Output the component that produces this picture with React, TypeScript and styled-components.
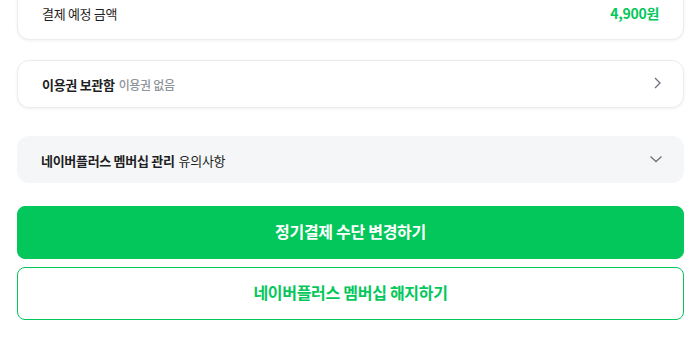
import styled, { createGlobalStyle } from 'styled-components'

const GlobalStyle = createGlobalStyle`
    html, body {
        margin: 0;
        padding: 0;
        background: #ffffff;
    }
    body {
        font-family: "Noto Sans CJK KR", "Noto Sans", sans-serif;
        color: #1e1e23;
        letter-spacing: -0.3px;
        line-height: 1;
    }
    * {
        box-sizing: border-box;
    }
`

const Page = styled.main`
    display: flex;
    flex-direction: column;
    padding: 0 16px 0 17px;
    overflow: hidden;
    height: 338px;
`

const Card = styled.section`
    display: flex;
    align-items: center;
    justify-content: space-between;
    padding: 0 24px 2px;
    height: 48px;
    background: #ffffff;
    border: 1px solid #ebecef;
    border-radius: 12px;
    box-shadow: 0 1px 3px rgba(0, 0, 0, 0.06);
`

const SummaryCard = styled(Card)`
    margin-top: -20px;
    height: 60px;
    padding-top: 8px;
    border-top-left-radius: 0;
    border-top-right-radius: 0;
`

const LinkCard = styled(Card)`
    margin-top: 20px;
    padding-right: 20px;
`

const Accordion = styled.section`
    display: flex;
    align-items: center;
    justify-content: space-between;
    margin-top: 28px;
    height: 47px;
    padding: 0 20px 2px 24px;
    background: #f5f6f8;
    border-radius: 12px;
`

const Label = styled.span`
    font-size: 13px;
    color: #1e1e23;
`

const Strong = styled.strong`
    font-weight: 700;
    font-size: 13px;
`

const Muted = styled.span`
    font-size: 12px;
    font-weight: 500;
    color: #8f949c;
    margin-left: 4px;
`

const Plain = styled.span`
    font-size: 13px;
    margin-left: 4px;
`

const Amount = styled.span`
    font-size: 14px;
    font-weight: 700;
    color: #03c75a;
`

const Button = styled.button<{ $outline?: boolean }>`
    display: flex;
    align-items: center;
    justify-content: center;
    width: 100%;
    height: 53px;
    padding: 0 0 3px;
    border-radius: 8px;
    font-family: inherit;
    font-size: 16px;
    font-weight: 700;
    line-height: 1;
    letter-spacing: -0.3px;
    cursor: pointer;
    border: 1px solid #03c75a;
    background: ${(p) => (p.$outline ? '#ffffff' : '#03c75a')};
    color: ${(p) => (p.$outline ? '#03c75a' : '#ffffff')};
`

const Actions = styled.div`
    display: flex;
    flex-direction: column;
    gap: 8px;
    margin-top: 23px;
`

const Icon = styled.svg`
    flex-shrink: 0;
    color: #6f737a;
`

export default function App(): JSX.Element {
    return (
        <>
            <GlobalStyle />
            <Page>
                <SummaryCard>
                    <Label>결제 예정 금액</Label>
                    <Amount>4,900원</Amount>
                </SummaryCard>
                <LinkCard>
                    <span>
                        <Strong>이용권 보관함</Strong>
                        <Muted>이용권 없음</Muted>
                    </span>
                    <Icon width="12" height="14" viewBox="0 0 12 14" fill="none">
                        <path
                            d="M4 2 L9 7 L4 12"
                            stroke="currentColor"
                            strokeWidth="1.3"
                        />
                    </Icon>
                </LinkCard>
                <Accordion>
                    <span>
                        <Strong>네이버플러스 멤버십 관리</Strong>
                        <Plain>유의사항</Plain>
                    </span>
                    <Icon width="16" height="12" viewBox="0 0 16 12" fill="none">
                        <path
                            d="M2.5 3.5 L8 8.5 L13.5 3.5"
                            stroke="currentColor"
                            strokeWidth="1.3"
                        />
                    </Icon>
                </Accordion>
                <Actions>
                    <Button>정기결제 수단 변경하기</Button>
                    <Button $outline>네이버플러스 멤버십 해지하기</Button>
                </Actions>
            </Page>
        </>
    )
}
